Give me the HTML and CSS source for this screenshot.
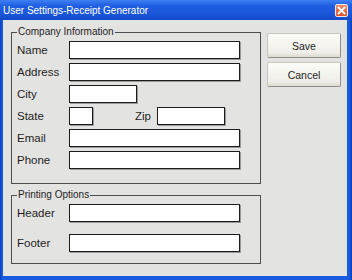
FILE: index.html
```html
<!DOCTYPE html>
<html lang="en">
<head>
    <meta charset="UTF-8">
    <title>User Settings-Receipt Generator</title>
    <link rel="stylesheet" href="styles.css">
</head>
<body>

<div class="window">
    <!-- Title bar -->
    <div class="titlebar">
        <span class="title">User Settings-Receipt Generator</span>
        <span class="close">
            <svg width="11" height="11" viewBox="0 0 11 11">
                <path d="M2.5 2.5 L8.5 8.5 M8.5 2.5 L2.5 8.5" stroke="#fff" stroke-width="1.8" stroke-linecap="square"/>
            </svg>
        </span>
    </div>

    <div class="client">
        <div class="groups">
            <!-- Company Information -->
            <fieldset class="group">
                <legend>Company Information</legend>
                <div class="fields company">
                    <div class="row"><label>Name</label><input type="text" class="wide"></div>
                    <div class="row"><label>Address</label><input type="text" class="wide"></div>
                    <div class="row"><label>City</label><input type="text" class="mid"></div>
                    <div class="row">
                        <label>State</label><input type="text" class="tiny">
                        <label class="zip">Zip</label><input type="text" class="mid">
                    </div>
                    <div class="row"><label>Email</label><input type="text" class="wide"></div>
                    <div class="row"><label>Phone</label><input type="text" class="wide"></div>
                </div>
            </fieldset>

            <!-- Printing Options -->
            <fieldset class="group printing">
                <legend>Printing Options</legend>
                <div class="fields print">
                    <div class="row"><label>Header</label><input type="text" class="wide"></div>
                    <div class="row"><label>Footer</label><input type="text" class="wide"></div>
                </div>
            </fieldset>
        </div>

        <div class="buttons">
            <button>Save</button>
            <button>Cancel</button>
        </div>
    </div>
</div>

</body>
</html>
```

FILE: styles.css
```css
* {
    box-sizing: border-box;
}
body {
    margin: 0;
    font-family: "Liberation Sans", Arial, sans-serif;
    color: #1e1e1e;
}
.window {
    width: 352px;
    height: 280px;
    display: flex;
    flex-direction: column;
    background: linear-gradient(90deg, #0a3fbf, #1a5ce0 2px, #1a5ce0 349px, #0a3fbf);
}
.titlebar {
    height: 20px;
    display: flex;
    align-items: center;
    justify-content: space-between;
    padding: 0 4px 0 3px;
    background: linear-gradient(#3f7ff2, #1f5ee2 30%, #1a56d8 70%, #1249c8);
    color: #fff;
    font-size: 10px;
}
.close {
    width: 13px;
    height: 13px;
    display: flex;
    align-items: center;
    justify-content: center;
    background: linear-gradient(#ec8a66, #d9522c);
    border: 1px solid #f4e6e0;
    border-radius: 2px;
}
.client {
    flex: 1;
    margin: 0 5px 4px 3px;
    padding: 6px 0 0 8px;
    display: flex;
    gap: 6px;
    background: #e3e3e1;
}
.groups {
    width: 250px;
}
.group {
    margin: 0;
    padding: 3px 0 14px 5px;
    border: 1px solid #4e4e4e;
}
.group legend {
    padding: 0 1px;
    font-size: 10px;
    line-height: 12px;
}
.printing {
    margin-top: 5px;
    padding-bottom: 11px;
}
.fields {
    display: flex;
    flex-direction: column;
}
.company {
    gap: 4px;
}
.print {
    gap: 12px;
}
.row {
    display: flex;
    align-items: center;
    height: 18px;
}
.row label {
    width: 52px;
    font-size: 11.5px;
}
.row label.zip {
    width: 22px;
    margin-left: 42px;
}
input[type="text"] {
    height: 18px;
    margin: 0;
    padding: 0 2px;
    border: 1px solid #1c1c1c;
    box-shadow: 1px 1px 0 #9a9a9a;
    background: #fff;
}
.wide {
    width: 171px;
}
.mid {
    width: 68px;
}
.tiny {
    width: 24px;
}
.buttons {
    display: flex;
    flex-direction: column;
    gap: 4px;
    padding-top: 7px;
}
.buttons button {
    width: 74px;
    height: 25px;
    font-family: "Liberation Sans", Arial, sans-serif;
    font-size: 10.5px;
    color: #1e1e1e;
    border: 1px solid #c9c7bd;
    border-right-color: #8f8e88;
    border-bottom-color: #8f8e88;
    border-radius: 2px;
    background: linear-gradient(#fcfcf8, #efeee8 80%, #dcdad0);
}
```
